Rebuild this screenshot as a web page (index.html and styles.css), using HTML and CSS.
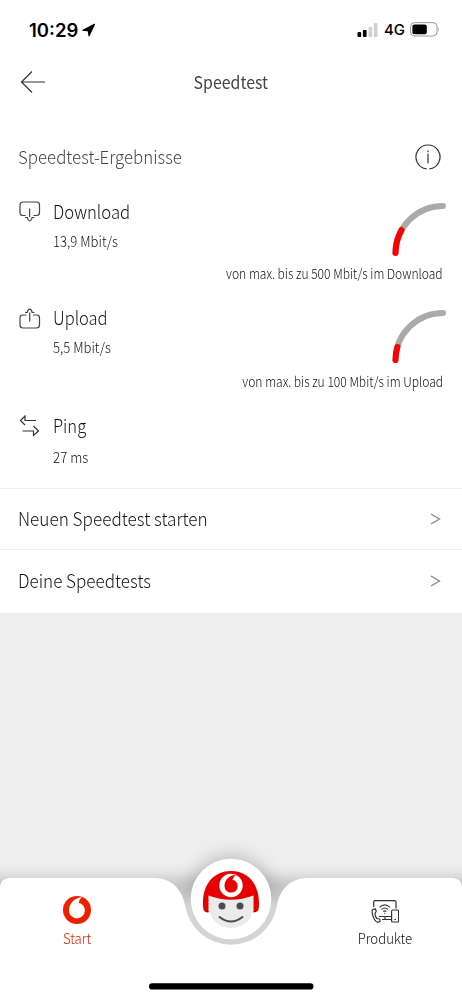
FILE: index.html
```html
<!DOCTYPE html>
<html lang="de">
<head>
<meta charset="utf-8">
<title>Speedtest</title>
<link rel="stylesheet" href="styles.css">
</head>
<body>
<div class="screen">
  <header class="status">
    <div class="status-left"><span class="clock">10:29</span>
      <svg width="14" height="14" viewBox="0 0 14 14"><path d="M12.500 1.300 1 7.300 6.200 7.700 7.100 12.800Z" stroke="#000" stroke-width="1.200" stroke-linejoin="round"/></svg>
    </div>
    <div class="status-right">
      <svg width="21" height="14" viewBox="0 0 21 14"><rect x=".5" y="9" width="3.7" height="5" rx="1"/><rect x="5.9" y="7" width="3.7" height="7" rx="1"/><g fill="#d0d0d0"><rect x="11.5" y="3.7" width="3.7" height="10.3" rx="1"/><rect x="16.8" y="0" width="3.7" height="14" rx="1"/></g></svg>
      <span class="net">4G</span>
      <svg width="30" height="15" viewBox="0 0 30 15"><rect x=".6" y=".6" width="26.4" height="13.4" rx="4" fill="none" stroke="#999"/><rect x="2.4" y="2.4" width="14.4" height="9.8" rx="2"/><path d="M28.2 5.2Q30 7.2 28.2 9.4Z" fill="#888"/></svg>
    </div>
  </header>
  <nav class="topbar">
    <svg class="back" width="26" height="24" viewBox="0 0 26 24" fill="none" stroke="#333" stroke-width="1.2"><path d="M25 12H1.5M12 1.5 1.5 12 12 22.5"/></svg>
    <h1><span class="t w-title">Speedtest</span></h1>
  </nav>
  <main>
    <div class="heading"><h2><span class="t w-head">Speedtest-Ergebnisse</span></h2>
      <svg width="26" height="26" viewBox="0 0 26 26" fill="none" stroke="#333" stroke-width="1.2"><path d="M11.6 24.9A12 12 0 1 1 14.4 24.9M13 9.700V19.200M13 6.500V8.200"/></svg>
    </div>
    <section class="metric download">
      <svg class="icon" width="22" height="22" viewBox="0 0 22 22" fill="none" stroke="#444" stroke-width="1.2"><path d="M6.7 14.5H4Q1 14.5 1 11.5V4Q1 1 4 1H17.5Q20.5 1 20.5 4V11.5Q20.5 14.5 17.5 14.5H14.5M10.6 7.5V16M6 16.5H8.3Q9 19.8 10.7 19.8T13.1 16.5H15.5"/></svg>
      <div class="values"><h3><span class="t w-down">Download</span></h3><p><span class="t w-139">13,9 Mbit/s</span></p></div>
      <div class="gauge"><svg width="56" height="56" viewBox="0 0 56 56" fill="none" stroke-width="6" stroke-linecap="round"><path stroke="#aaa" d="M4.5 51A47.5 47.5 0 0 1 52 4"/><path stroke="#f00" d="M4.5 51A47.5 47.5 0 0 1 10.5 28"/></svg><p><span class="t w-max1">von max. bis zu 500 Mbit/s im Download</span></p></div>
    </section>
    <section class="metric upload">
      <svg class="icon" width="22" height="22" viewBox="0 0 22 22" fill="none" stroke="#444" stroke-width="1.2"><path d="M7.5 7H4Q1 7 1 10V17Q1 20 4 20H17.5Q20.5 20 20.5 17V10Q20.5 7 17.5 7H14M10.7 13.5V4.5M6 4.5H8.2Q9 1.2 10.7 1.2T13.2 4.5H15.5"/></svg>
      <div class="values"><h3><span class="t w-up">Upload</span></h3><p><span class="t w-55">5,5 Mbit/s</span></p></div>
      <div class="gauge"><svg width="56" height="56" viewBox="0 0 56 56" fill="none" stroke-width="6" stroke-linecap="round"><path stroke="#aaa" d="M4.5 51A47.5 47.5 0 0 1 52 4"/><path stroke="#f00" d="M4.5 51A47.5 47.5 0 0 1 6.4 38"/></svg><p><span class="t w-max2">von max. bis zu 100 Mbit/s im Upload</span></p></div>
    </section>
    <section class="metric ping">
      <svg class="icon" width="22" height="22" viewBox="0 0 22 22" fill="none" stroke="#333" stroke-width="1.2"><path d="M17 5.5H6V1L1.5 5.5 6 10M3.5 16H14.5V20.5L19.5 16 14.5 11"/></svg>
      <div class="values"><h3><span class="t w-ping">Ping</span></h3><p><span class="t w-27">27 ms</span></p></div>
    </section>
  </main>
  <ul class="links">
    <li><span class="t w-neu">Neuen Speedtest starten</span><svg width="11" height="12" viewBox="0 0 11 12" fill="none" stroke="#888" stroke-width="1.3"><path d="M1 1 9.5 6 1 11"/></svg></li>
    <li><span class="t w-deine">Deine Speedtests</span><svg width="11" height="12" viewBox="0 0 11 12" fill="none" stroke="#888" stroke-width="1.3"><path d="M1 1 9.5 6 1 11"/></svg></li>
  </ul>
  <footer class="dock">
    <svg class="dock-bg" width="462" height="159" viewBox="0 840 462 159">
      <defs><filter id="s" x="-40%" y="-40%" width="180%" height="180%"><feGaussianBlur stdDeviation="9"/></filter>
      <linearGradient id="g" x1="0" y1="878" x2="0" y2="908" gradientUnits="userSpaceOnUse"><stop offset="0" stop-color="#d4d4d4" stop-opacity="0"/><stop offset="1" stop-color="#d4d4d4"/></linearGradient></defs>
      <path d="M-20 880H482V1020H-20Z" fill="#000" opacity=".23" filter="url(#s)"/>
      <circle cx="231" cy="897" r="41" fill="#000" opacity=".22" filter="url(#s)"/>
      <path d="M160 878H302V950H160Z" fill="url(#g)"/>
      <path d="M0 999V888Q0 878 11 878H154C171 878 182 889 185 905A46.5 46.5 0 0 0 277 905C280 889 291 878 308 878H451Q462 878 462 888V999Z" fill="#fff"/>
      <circle cx="231" cy="899" r="40.3" fill="#fff"/>
      <path d="M208.5 888V904C208.5 919 218 928 231 928S253.500 919 253.500 904V888Z" fill="#ebebeb"/>
      <path d="M203 906C202 884 214 871 231 871S260 884 259 906Q259 911 253.500 912V895.500Q231 904 208.500 895.500V912Q203 911 203 906Z" fill="#e60000"/>
      <path d="M203 908Q204 912.500 208.500 912.500V911Q205 911 203 908ZM259 908Q258 912.500 253.500 912.500V911Q257 911 259 908Z" fill="#a90000"/>
      <circle cx="231" cy="885.500" r="11.700" fill="#fff"/>
      <path d="M237 875C230 874.500 224.500 879.500 224.500 886A6.600 6.600 0 0 0 237.700 886C237.700 882.500 235.500 880.500 232.500 879.700C233 877.500 234.500 875.800 237 875Z" fill="#e60000"/>
      <g fill="#4a4d4e"><circle cx="222" cy="906" r="3.500"/><circle cx="240" cy="906" r="3.500"/></g>
      <path d="M219.500 917Q231 926 242.500 917" fill="none" stroke="#4a4d4e" stroke-width="2" stroke-linecap="round"/>
      <rect x="149" y="983.300" width="164.500" height="6.200" rx="3.100"/>
    </svg>
    <div class="tabs">
      <div class="tab active"><svg width="28" height="28" viewBox="0 0 28 28"><circle cx="14" cy="14" r="14" fill="#ee2000"/><path d="M19 1.200C12 1.500 6 7 6 14.500A7.900 7.900 0 0 0 21.800 14.500C21.800 10 19 7.700 15.800 7C15.800 4.500 17.500 2.200 19 1.200Z" fill="#fff"/></svg><span class="t w-start">Start</span></div>
      <div class="tab"><svg width="28" height="28" viewBox="0 0 28 28" fill="none" stroke="#333" stroke-width="1.200"><path d="M2.700 11V6Q2.700 4.600 4 4.600H23.500Q25 4.600 25 6V12.500M8 20.500H20M11 23.500H20M14 20.500V23.500"/><rect x="20.600" y="14" width="7" height="12" rx="1"/><path d="M23.400 23.500H25"/><path d="M2 13.300C0 15 2 24 6.500 26.300L9 25.500 8.700 23 6 22.500C4.500 21 3.800 18.500 4.200 17L5.200 15.500 4.400 13Z"/><path d="M8.500 11.300Q13.800 6.300 19 11.300M10.500 13.500Q13.800 10.500 17 13.500M12.300 15.500Q13.800 14.200 15.300 15.500" stroke-width="1.100"/><circle cx="13.800" cy="17.300" r=".3" stroke-width=".8"/></svg><span class="t w-prod">Produkte</span></div>
    </div>
  </footer>
</div>
</body>
</html>
```
FILE: styles.css
```css
* { box-sizing: border-box; margin: 0; padding: 0; }
body { width: 462px; height: 999px; overflow: hidden; background: #eee; font-family: "Noto Sans CJK SC", "Noto Sans", sans-serif; font-weight: 300; color: #111; }
svg { display: block; flex: none; }
.screen { height: 999px; display: flex; flex-direction: column; }
.t { display: inline-block; white-space: nowrap; transform-origin: left center; }
.w-title { transform: scaleX(.935); transform-origin: center; }
.w-head { transform: scaleX(.937); }
.w-down { transform: scaleX(.903); }
.w-up { transform: scaleX(.893); }
.w-ping { transform: scaleX(.893); }
.w-139, .w-55 { transform: scaleX(.9); }
.w-27 { transform: scaleX(.915); }
.w-max1, .w-max2 { transform: scaleX(.9); transform-origin: right center; }
.w-neu { transform: scaleX(.927); }
.w-deine { transform: scaleX(.923); }
.w-start, .w-prod { transform: scaleX(.94); transform-origin: center; }
h1, h2, h3, p { font-weight: inherit; }
.status { height: 60px; background: #fff; display: flex; justify-content: space-between; padding: 0 22px 1px 29px; align-items: center; font-family: Inter, sans-serif; color: #000; }
.status-left, .status-right { display: flex; align-items: center; }
.clock { font-size: 18.5px; font-weight: 600; margin-right: 4px; }
.net { font-size: 15px; font-weight: 500; margin: 0 5px 0 6px; }
.topbar { height: 45px; background: #fff; display: grid; grid-template-columns: 60px 1fr 60px; align-items: center; padding: 0 0 1px 20px; }
.topbar h1 { font-size: 17px; font-weight: 400; text-align: center; padding-right: 20px; line-height: 24px; color: #444; }
main { height: 383px; background: #fff; padding-top: 38px; }
.heading { height: 28px; padding: 0 21px 0 18px; display: flex; justify-content: space-between; align-items: center; }
.heading h2 { font-size: 18px; line-height: 26px; padding-bottom: 2px; color: #444; }
.metric { display: flex; padding: 0 15px 0 19px; height: 107px; }
.metric.download { margin-top: 28px; }
.icon { margin-top: 2px; }
.values { margin: -2px 0 0 12px; flex: 1; white-space: nowrap; }
.values h3 { font-size: 18.5px; line-height: 28px; }
.values p { font-size: 14.6px; line-height: 22px; margin-top: 5px; }
.upload .values { margin-top: -3px; }
.ping .values p { margin-top: 7px; }
.gauge { width: 220px; display: flex; flex-direction: column; align-items: flex-end; padding-top: 3px; white-space: nowrap; }
.gauge p { font-size: 13.4px; line-height: 20px; margin-top: 5px; padding-right: 4px; }
.upload .gauge p { margin-top: 6px; }
.links { list-style: none; background: #fff; height: 125px; }
.links li { height: 61px; border-top: 1px solid #f0f0f0; padding: 0 21px 0 18px; display: flex; align-items: center; justify-content: space-between; font-size: 18.5px; }
.links li .t { margin-top: -2px; }
.links li + li { height: 64px; padding-bottom: 1px; }
.dock { height: 159px; margin-top: auto; position: relative; }
.dock-bg { position: absolute; left: 0; top: 0; }
.tabs { position: relative; display: flex; justify-content: space-between; padding-top: 56px; }
.tab { width: 154px; display: flex; flex-direction: column; align-items: center; font-size: 14px; line-height: 22px; gap: 3px; }
.active { color: #ee2000; }
```
